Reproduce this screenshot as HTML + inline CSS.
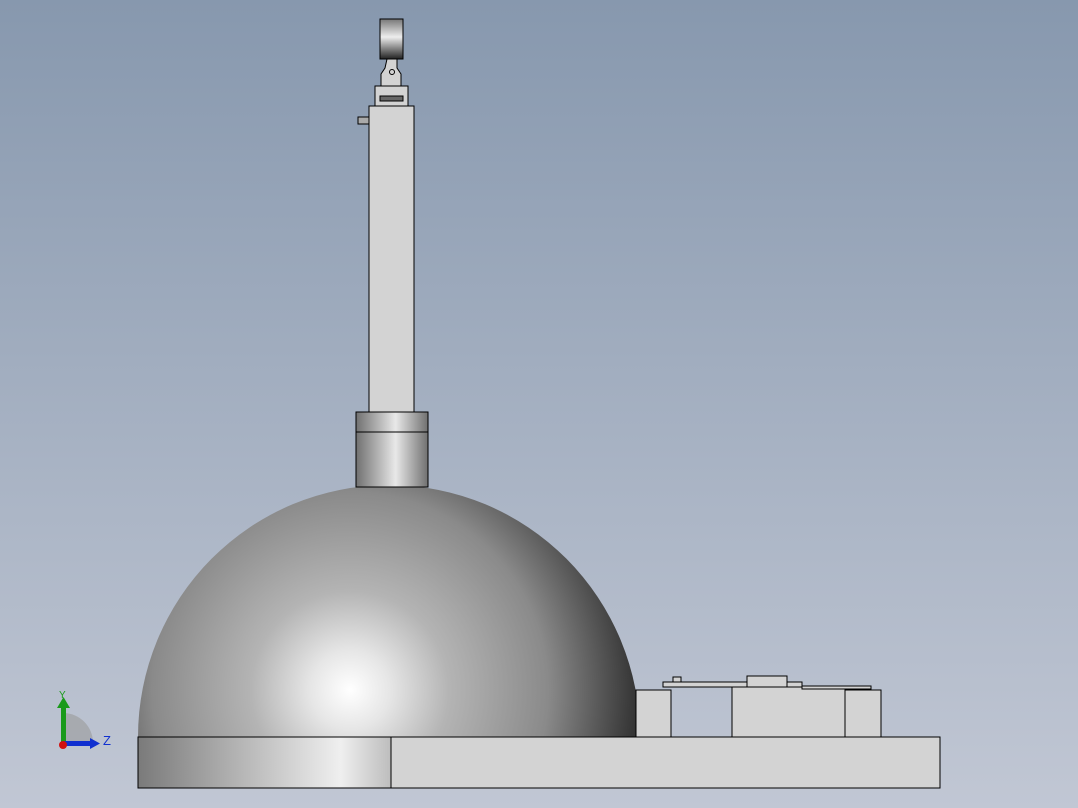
<!DOCTYPE html>
<html><head><style>html,body{margin:0;padding:0;overflow:hidden}body{width:1078px;height:808px}</style></head><body>
<svg width="1078" height="808" xmlns="http://www.w3.org/2000/svg">
<defs>
<linearGradient id="bg" x1="0" y1="0" x2="0" y2="1"><stop offset="0" stop-color="#8798ae"/><stop offset="1" stop-color="#c1c7d4"/></linearGradient>
<radialGradient id="dome" cx="350" cy="690" r="330" gradientUnits="userSpaceOnUse"><stop offset="0" stop-color="#ffffff"/><stop offset="0.12" stop-color="#e6e6e6"/><stop offset="0.3" stop-color="#b4b4b4"/><stop offset="0.6" stop-color="#8a8a8a"/><stop offset="0.85" stop-color="#3a3a3a"/><stop offset="1" stop-color="#111"/></radialGradient>
<linearGradient id="cyl" x1="0" x2="1"><stop offset="0" stop-color="#707070"/><stop offset="0.55" stop-color="#e8e8e8"/><stop offset="1" stop-color="#707070"/></linearGradient>
<linearGradient id="strip" x1="0" x2="1"><stop offset="0" stop-color="#7a7a7a"/><stop offset="0.8" stop-color="#efefef"/><stop offset="1" stop-color="#bdbdbd"/></linearGradient>
<linearGradient id="gauge" x1="0" y1="0" x2="0" y2="1"><stop offset="0" stop-color="#777"/><stop offset="0.45" stop-color="#eee"/><stop offset="1" stop-color="#222"/></linearGradient>
</defs>
<rect width="1078" height="808" fill="url(#bg)"/>
<g stroke="#000" stroke-width="1">
<path d="M138,737 A251,252 0 0 1 640,737 Z" fill="url(#dome)" stroke="none"/>
<rect x="356" y="412" width="72" height="75" fill="url(#cyl)"/>
<line x1="356" y1="432" x2="428" y2="432"/>
<rect x="369" y="106" width="45" height="306" fill="#d3d3d3"/>
<rect x="358" y="117" width="11" height="7" fill="#aaa"/>
<rect x="375" y="86" width="33" height="20" fill="#d3d3d3"/>
<rect x="380" y="96" width="23" height="5" fill="#666"/>
<path d="M387,59 h10 v9 l4,6 v12 h-20 v-12 l4,-6 z" fill="#d3d3d3"/>
<circle cx="392" cy="72" r="2.5" fill="none"/>
<rect x="380" y="19" width="23" height="40" fill="url(#gauge)"/>
<rect x="138" y="737" width="253" height="51" fill="url(#strip)"/>
<rect x="391" y="737" width="549" height="51" fill="#d3d3d3"/>
<rect x="636" y="690" width="35" height="47" fill="#d3d3d3"/>
<rect x="732" y="686" width="113" height="51" fill="#d3d3d3"/>
<rect x="845" y="690" width="36" height="47" fill="#d3d3d3"/>
<rect x="802" y="686" width="69" height="3" fill="#d3d3d3"/>
<rect x="663" y="682" width="84" height="5" fill="#d3d3d3"/>
<rect x="787" y="682" width="15" height="5" fill="#d3d3d3"/>
<rect x="747" y="676" width="40" height="11" fill="#d3d3d3"/>
<rect x="673" y="677" width="8" height="5" fill="#d3d3d3"/>
</g>
<path d="M63,713 A30,30 0 0 1 93,743 L63,743 Z" fill="#999" opacity="0.6"/>
<rect x="61" y="705" width="5" height="38" fill="#1a9a1a"/>
<path d="M57,708 L63.5,697 L70,708 Z" fill="#1a9a1a"/>
<rect x="63" y="741" width="28" height="5" fill="#1030d0"/>
<path d="M90,738 L100,743.5 L90,749 Z" fill="#1030d0"/>
<circle cx="63" cy="745" r="4" fill="#d01010"/>
<text x="59" y="698" font-family="Liberation Sans,sans-serif" font-size="10" fill="#1a9a1a">Y</text>
<text x="103" y="745" font-family="Liberation Sans,sans-serif" font-size="13" fill="#1030d0">Z</text>
</svg>
</body></html>
